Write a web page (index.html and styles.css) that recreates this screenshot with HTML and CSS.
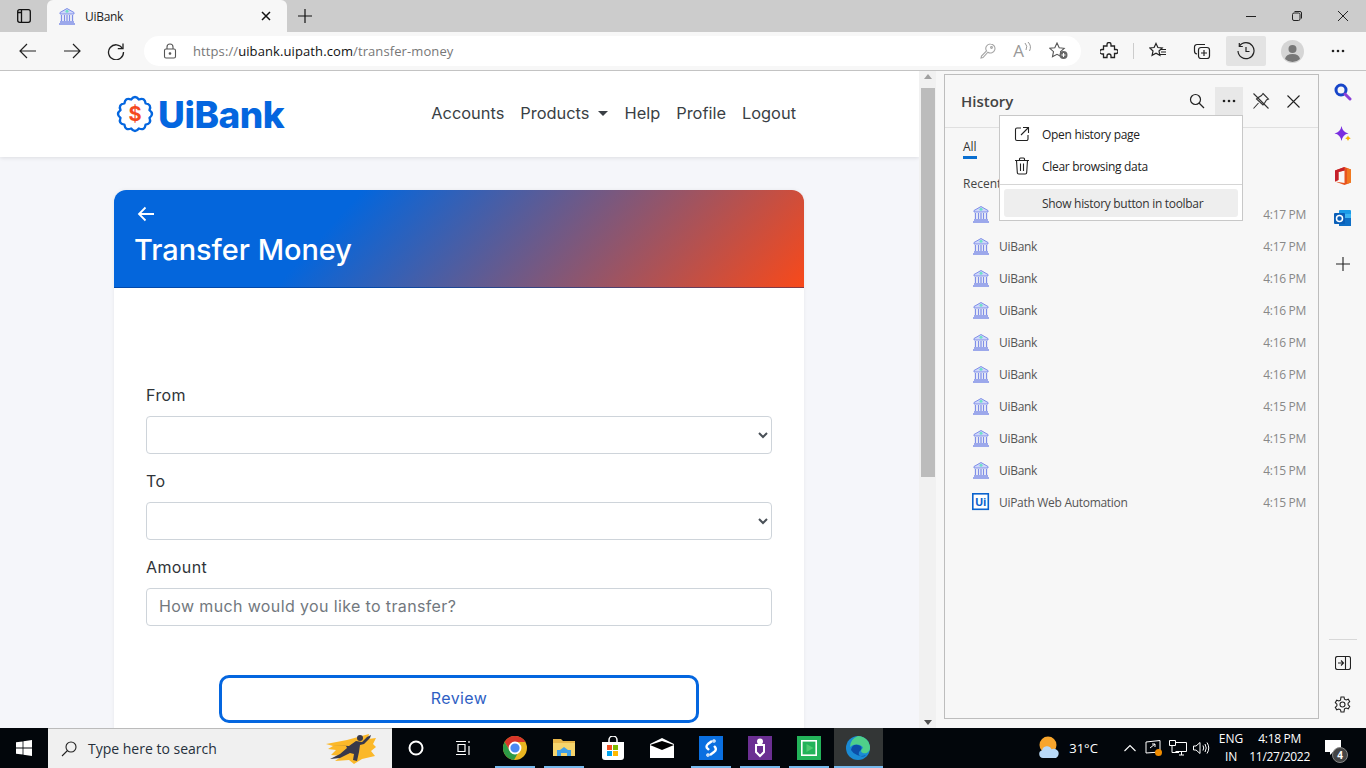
FILE: index.html
```html
<!DOCTYPE html>
<html lang="en">
<head>
<meta charset="utf-8">
<title>UiBank</title>
<link rel="stylesheet" href="styles.css">
</head>
<body>
<svg class="defs" width="0" height="0" aria-hidden="true">
  <symbol id="bank" viewBox="0 0 18 18">
    <path d="M9 1.500 2 5.500v1.500h14V5.500z" fill="#cfd6fb" stroke="#7f8fe8" stroke-width="1"/>
    <circle cx="9" cy="4.300" r="1.500" fill="#6fe0c8"/>
    <path d="M3.500 8v6M6.500 8v6M9 8v6M11.500 8v6M14.500 8v6" stroke="#7f8fe8" stroke-width="1.300"/>
    <path d="M2 15h14M1 17h16" stroke="#7f8fe8" stroke-width="1.300"/>
  </symbol>
</svg>

<header class="titlebar">
  <button class="tb-btn tab-toggle"><svg width="16" height="16" viewBox="0 0 16 16" fill="none" stroke="#111" stroke-width="1.300"><rect x="1.700" y="1.700" width="12.600" height="12.600" rx="2"/><path d="M5.500 2v12M2 4.500h3.500"/></svg></button>
  <div class="tab">
    <svg class="tab-ico" width="18" height="18"><use href="#bank"/></svg>
    <span class="tab-title">UiBank</span>
    <svg class="tab-x" width="10" height="10" viewBox="0 0 10 10" stroke="#111" stroke-width="1.500"><path d="M1 1l8 8M9 1l-8 8"/></svg>
  </div>
  <button class="tb-btn new-tab"><svg width="16" height="16" viewBox="0 0 16 16" stroke="#111" stroke-width="1.200"><path d="M8 1v14M1 8h14"/></svg></button>
  <div class="win-ctrls">
    <svg width="12" height="12" viewBox="0 0 12 12" stroke="#222"><path d="M1 6.500h10"/></svg>
    <svg width="12" height="12" viewBox="0 0 12 12" fill="none" stroke="#222"><rect x="1.500" y="3" width="7.500" height="7.500" rx="1.500"/><path d="M3.500 1.500h5.500a1.500 1.500 0 0 1 1.500 1.500v5.500"/></svg>
    <svg width="12" height="12" viewBox="0 0 12 12" stroke="#222"><path d="M1 1l10 10M11 1 1 11"/></svg>
  </div>
</header>

<nav class="toolbar">
  <button class="ico-btn"><svg width="18" height="18" viewBox="0 0 18 18" fill="none" stroke="#222" stroke-width="1.200"><path d="M17 9H1M8 2 1 9l7 7"/></svg></button>
  <button class="ico-btn"><svg width="18" height="18" viewBox="0 0 18 18" fill="none" stroke="#222" stroke-width="1.200"><path d="M1 9h16M10 2l7 7-7 7"/></svg></button>
  <button class="ico-btn"><svg width="18" height="18" viewBox="0 0 18 18" fill="none" stroke="#222" stroke-width="1.300"><path d="M15.500 6.500A7.500 7.500 0 1 0 16.500 10"/><path d="M16 1.500v5.200h-5.200"/></svg></button>
  <div class="address">
    <svg class="lock" width="14" height="16" viewBox="0 0 14 16" fill="none" stroke="#555" stroke-width="1.100"><rect x="1.500" y="6" width="11" height="9" rx="1.500"/><path d="M4 6V4a3 3 0 0 1 6 0v2"/><circle cx="7" cy="10.500" r=".8" fill="#555"/></svg>
    <span class="url"><span class="url-dim">https://</span>uibank.uipath.com<span class="url-dim">/transfer-money</span></span>
    <div class="addr-icons">
      <svg width="16" height="16" viewBox="0 0 16 16" fill="none" stroke="#a5a5a5" stroke-width="1.100"><path d="M10.500 1a4.500 4.500 0 1 1-2.600 8.200L3 14.500l-2 .5.500-2 5-5.100A4.500 4.500 0 0 1 10.500 1z"/><circle cx="11.500" cy="4.500" r=".9"/></svg>
      <span class="read-aloud">A<svg width="8" height="10" viewBox="0 0 8 10" fill="none" stroke="#999"><path d="M1 1q3 3 1 7M4 0q4 4 1.500 9"/></svg></span>
      <svg width="20" height="18" viewBox="0 0 20 18" fill="none" stroke="#555" stroke-width="1.100"><path d="M8 1l2.200 4.700 5 .6-3.700 3.400 1 5L8 12.300l-4.500 2.400 1-5L.8 6.300l5-.6z"/><circle cx="14.500" cy="13" r="4" fill="#666" stroke="none"/><path d="M14.500 11v4M12.500 13h4" stroke="#fff"/></svg>
    </div>
  </div>
  <div class="tools">
    <button class="tool"><svg width="18" height="18" viewBox="0 0 18 18" fill="none" stroke="#222" stroke-width="1.300"><path d="M7 2.500a2 2 0 0 1 4 0V4h3.500v3.500H16a2 2 0 0 1 0 4h-1.500V15.500H11V14a2 2 0 0 0-4 0v1.500H3.500V12H2a2.200 2.200 0 0 1 0-4.500h1.500V4H7z"/></svg></button>
    <span class="tool-sep"></span>
    <button class="tool"><svg width="18" height="18" viewBox="0 0 18 18" fill="none" stroke="#222" stroke-width="1.200"><path d="M7 1.500l1.900 4 4.300.5-3.200 3 .9 4.300L7 11.200l-3.900 2.100.9-4.300-3.200-3 4.300-.5z"/><path d="M12 7.500h5M12 10h5M11 12.500h6"/></svg></button>
    <button class="tool"><svg width="18" height="18" viewBox="0 0 18 18" fill="none" stroke="#222" stroke-width="1.200"><rect x="5.500" y="5.500" width="11" height="11" rx="2.500"/><path d="M11 8v6M8 11h6M12 2.500H4A2.500 2.500 0 0 0 1.500 5v4A3 3 0 0 0 4 12"/></svg></button>
    <button class="tool tool-on"><svg width="18" height="18" viewBox="0 0 18 18" fill="none" stroke="#222" stroke-width="1.200"><path d="M2.500 4A8 8 0 1 1 1 9"/><path d="M2.300 1v3.500h3.500M9 5v4.500h3.500"/></svg></button>
    <button class="tool avatar-btn"><svg width="23" height="23" viewBox="0 0 23 23"><circle cx="11.500" cy="11.500" r="11.500" fill="#d5d5d5"/><circle cx="11.500" cy="9" r="4" fill="#777"/><path d="M4 19q1-5 7.500-5T19 19a11 11 0 0 1-15 0z" fill="#777"/></svg></button>
    <button class="tool dots-btn"><svg width="14" height="4" viewBox="0 0 14 4" fill="#222"><circle cx="2" cy="2" r="1.300"/><circle cx="7" cy="2" r="1.300"/><circle cx="12" cy="2" r="1.300"/></svg></button>
  </div>
</nav>

<main class="workspace">
  <section class="page">
    <div class="page-scroll">
      <div class="site-nav">
        <div class="brand">
          <svg width="38" height="38" viewBox="0 0 38 38" fill="none"><g transform="translate(19 19)"><path d="M14.490-3.880Q19.500 0 14.490 3.880Q16.890 9.750 10.610 10.610Q9.750 16.890 3.880 14.490Q0 19.500-3.880 14.490Q-9.750 16.890-10.610 10.610Q-16.890 9.750-14.490 3.880Q-19.500 0-14.490-3.880Q-16.890-9.750-10.610-10.610Q-9.750-16.890-3.880-14.490Q0-19.500 3.880-14.490Q9.750-16.890 10.610-10.610Q16.890-9.750 14.490-3.880Z" stroke="#0466df" stroke-width="2.400" stroke-linejoin="round"/></g><text class="brand-dollar" x="19" y="26" text-anchor="middle">$</text></svg>
          <span class="brand-name">UiBank</span>
        </div>
        <ul class="nav-links">
          <li>Accounts</li>
          <li class="caret">Products</li>
          <li>Help</li>
          <li>Profile</li>
          <li>Logout</li>
        </ul>
      </div>
      <div class="card">
        <div class="card-head">
          <svg class="back" width="18" height="16" viewBox="0 0 18 16" fill="none" stroke="#fff" stroke-width="1.800"><path d="M17 8H2M8.500 1.500 2 8l6.500 6.500"/></svg>
          <h1>Transfer Money</h1>
        </div>
        <form class="card-body">
          <label class="lbl" for="from">From</label>
          <select class="ctl" id="from"><option></option></select>
          <label class="lbl" for="to">To</label>
          <select class="ctl" id="to"><option></option></select>
          <label class="lbl" for="amount">Amount</label>
          <input class="ctl" id="amount" placeholder="How much would you like to transfer?">
          <button type="button" class="review">Review</button>
        </form>
      </div>
    </div>
    <div class="scrollbar">
      <span class="arrow-up"></span>
      <span class="thumb"></span>
      <span class="arrow-down"></span>
    </div>
  </section>

  <aside class="history">
    <div class="hist-head">
      <h2>History</h2>
      <div class="hist-actions">
        <button class="hist-btn"><svg width="16" height="16" viewBox="0 0 16 16" fill="none" stroke="#222" stroke-width="1.200"><circle cx="6.500" cy="6.500" r="5"/><path d="M10 10l5 5"/></svg></button>
        <button class="hist-btn hist-on"><svg width="14" height="4" viewBox="0 0 14 4" fill="#222"><circle cx="2" cy="2" r="1.300"/><circle cx="7" cy="2" r="1.300"/><circle cx="12" cy="2" r="1.300"/></svg></button>
        <button class="hist-btn"><svg width="18" height="18" viewBox="0 0 18 18" fill="none" stroke="#333" stroke-width="1.100"><path d="M11 1.500l5.500 5.500-2 1-2.500 4-1 1L4.500 7l1-1 4-2.500zM6.500 11 1.500 16.500M1.500 1.500l15 15"/></svg></button>
        <button class="hist-btn"><svg width="13" height="13" viewBox="0 0 13 13" stroke="#222" stroke-width="1.100"><path d="M.5.500l12 12M12.500.500l-12 12"/></svg></button>
      </div>
    </div>
    <div class="hist-tabs"><span class="hist-tab">All</span></div>
    <div class="hist-recent">Recent</div>
    <ul class="hist-list">
      <li class="hist-row"><svg width="18" height="18"><use href="#bank"/></svg><span class="hist-name"></span><time>4:17 PM</time></li>
      <li class="hist-row"><svg width="18" height="18"><use href="#bank"/></svg><span class="hist-name">UiBank</span><time>4:17 PM</time></li>
      <li class="hist-row"><svg width="18" height="18"><use href="#bank"/></svg><span class="hist-name">UiBank</span><time>4:16 PM</time></li>
      <li class="hist-row"><svg width="18" height="18"><use href="#bank"/></svg><span class="hist-name">UiBank</span><time>4:16 PM</time></li>
      <li class="hist-row"><svg width="18" height="18"><use href="#bank"/></svg><span class="hist-name">UiBank</span><time>4:16 PM</time></li>
      <li class="hist-row"><svg width="18" height="18"><use href="#bank"/></svg><span class="hist-name">UiBank</span><time>4:16 PM</time></li>
      <li class="hist-row"><svg width="18" height="18"><use href="#bank"/></svg><span class="hist-name">UiBank</span><time>4:15 PM</time></li>
      <li class="hist-row"><svg width="18" height="18"><use href="#bank"/></svg><span class="hist-name">UiBank</span><time>4:15 PM</time></li>
      <li class="hist-row"><svg width="18" height="18"><use href="#bank"/></svg><span class="hist-name">UiBank</span><time>4:15 PM</time></li>
      <li class="hist-row"><svg width="18" height="18" viewBox="0 0 18 18"><rect x=".8" y=".8" width="15.500" height="15.500" fill="#fff" stroke="#0b63ce" stroke-width="1.600"/><text class="ui-mark" x="8.500" y="13" text-anchor="middle">Ui</text></svg><span class="hist-name">UiPath Web Automation</span><time>4:15 PM</time></li>
    </ul>
    <div class="menu">
      <div class="menu-item"><svg width="16" height="16" viewBox="0 0 16 16" fill="none" stroke="#222" stroke-width="1.100"><path d="M7 2H3a1.500 1.500 0 0 0-1.500 1.500v9.500A1.500 1.500 0 0 0 3 14.500h9.500A1.500 1.500 0 0 0 14 13V9M9 1.500h5.500V7M14.500 1.500 7 9"/></svg><span>Open history page</span></div>
      <div class="menu-item"><svg width="16" height="18" viewBox="0 0 16 18" fill="none" stroke="#222" stroke-width="1.100"><path d="M1 3.500h14M5.500 3.500V2a1 1 0 0 1 1-1h3a1 1 0 0 1 1 1v1.500M2.500 3.500l.8 12a1.500 1.500 0 0 0 1.500 1.500h6.400a1.500 1.500 0 0 0 1.500-1.500l.8-12M6.500 6.500v7.500M9.500 6.500v7.500"/></svg><span>Clear browsing data</span></div>
      <div class="menu-sep"></div>
      <div class="menu-item menu-on"><span>Show history button in toolbar</span></div>
    </div>
  </aside>

  <aside class="sidebar">
    <div class="side-top">
      <svg width="18" height="18" viewBox="0 0 18 18" fill="none"><circle cx="7" cy="7" r="5" stroke="#1746c9" stroke-width="3"/><path d="M11 11l5 5" stroke="#8b3fd6" stroke-width="3" stroke-linecap="round"/></svg>
      <svg width="18" height="18" viewBox="0 0 18 18"><path d="M7.500 1q1 6 7 7.500-6 1-7 7.500-1-6.500-7-7.500 6-1.500 7-7.500z" fill="#7a2fe0"/><path d="M14 10.500q.4 2.200 2.800 2.800-2.400.6-2.800 2.800-.4-2.200-2.800-2.800 2.400-.6 2.800-2.800z" fill="#f6b400"/></svg>
      <svg class="side-tall" width="18" height="20" viewBox="0 0 18 20"><path d="M10.500 1 17 3.500v13L10.500 19 1 15.500l9.500 1.500V4.500L4.500 6v8L1 15.500v-11z" fill="#e8541e"/><path d="M1 4.500 10.500 1v3.500L4.500 6v8L1 15.500z" fill="#c4202c"/><path d="M13 2.200 17 3.500v13l-4 1.500z" fill="#f0791f"/></svg>
      <svg width="18" height="18" viewBox="0 0 18 18"><rect x="5" y="1" width="12" height="16" rx="1" fill="#1a9be8"/><path d="M5 9h12v8H5z" fill="#0f6fc6"/><path d="M11 5h6v4h-6z" fill="#3ab4f2"/><rect x="0" y="4" width="11" height="11" rx="1" fill="#0a5fb8"/><circle cx="5.500" cy="9.500" r="3" fill="none" stroke="#fff" stroke-width="1.500"/></svg>
      <svg class="side-plus" width="14" height="14" viewBox="0 0 14 14" stroke="#222" stroke-width="1.100"><path d="M7 0v14M0 7h14"/></svg>
    </div>
    <div class="side-bottom">
      <svg width="16" height="14" viewBox="0 0 16 14" fill="none" stroke="#222" stroke-width="1.100"><rect x=".5" y=".5" width="15" height="13" rx="2"/><path d="M10.500 1v12M3 7h5M6 4.500 8.500 7 6 9.500"/></svg>
      <svg width="17" height="17" viewBox="0 0 17 17" fill="none" stroke="#222" stroke-width="1.100"><circle cx="8.500" cy="8.500" r="2.500"/><path d="M7 1h3l.5 2.200 1.600.8 2.200-.8 1.400 2.500-1.600 1.500v1.600l1.600 1.500-1.400 2.500-2.200-.8-1.600.8L10 16H7l-.5-2.200-1.600-.8-2.200.8L1.300 11.300 2.900 9.800V8.200L1.300 6.700 2.700 4.200l2.200.8L6.500 4.200z"/></svg>
    </div>
  </aside>
</main>

<footer class="taskbar">
  <button class="start"><svg width="16" height="16" viewBox="0 0 16 16" fill="#fff"><path d="M0 2.300 6.600 1.400v6.200H0zM7.400 1.300 16 0v7.600H7.400zM0 8.400h6.600v6.200L0 13.700zM7.400 8.400H16V16l-8.600-1.300z"/></svg></button>
  <div class="search">
    <svg width="16" height="16" viewBox="0 0 16 16" fill="none" stroke="#222" stroke-width="1.100"><circle cx="10" cy="6" r="5"/><path d="M6.500 9.500 1 15"/></svg>
    <span class="search-text">Type here to search</span>
    <svg class="search-art" width="54" height="34" viewBox="0 0 54 34"><path d="M3 12 24 8l22-6-1 5 8-1-3 6 3 3-5 4 4 5-13 3-8 5-5-4-14 1 7-5-11-1 5-5-8-1 5-3z" fill="#fbb829"/><circle cx="37" cy="6" r="3" fill="#38384a"/><path d="M9 13l17 1 7-5 6 1 5-5 4-2-1 3-6 6-4 1-1 7-2 9-4-1 1-6-4-1-10 5-10 1 10-5 7-6-1-2z" fill="#38384a"/></svg>
  </div>
  <button class="task cortana"><svg width="16" height="16" viewBox="0 0 16 16" fill="none" stroke="#fff" stroke-width="2"><circle cx="8" cy="8" r="6.500"/></svg></button>
  <button class="task taskview"><svg width="16" height="16" viewBox="0 0 16 16" fill="none" stroke="#fff" stroke-width="1.200"><path d="M1 1.500h10M3 4.500h7v7H3zM1 14.500h10M14 1v2M14 6v9"/></svg></button>
  <button class="task open"><svg width="24" height="24" viewBox="0 0 24 24"><circle cx="12" cy="12" r="12" fill="#e9b520"/><path d="M12 6h10.400A12 12 0 0 0 1.600 6L7 15z" fill="#d8352a"/><path d="M1.600 6A12 12 0 0 0 11 24l5-9-9 0z" fill="#2d9a46"/><circle cx="12" cy="12" r="5.500" fill="#4a89f2" stroke="#fff" stroke-width="1.800"/></svg></button>
  <button class="task open"><svg width="22" height="20" viewBox="0 0 22 20"><path d="M0 1h8l2 2h12v15H0z" fill="#e8b64a"/><path d="M0 5h22v13H0z" fill="#f6d46c"/><path d="M4 18v-6h3l4-3 4 3h3v6h-4v-3H8v3z" fill="#3f9fe8"/></svg></button>
  <button class="task"><svg width="24" height="24" viewBox="0 0 24 24"><path d="M1 6h22v15a3 3 0 0 1-3 3H4a3 3 0 0 1-3-3z" fill="#fff"/><path d="M8 6V4a4 4 0 0 1 8 0v2" fill="none" stroke="#fff" stroke-width="1.500"/><path d="M6 9h5v5H6z" fill="#f25022"/><path d="M12 9h5v5h-5z" fill="#7fba00"/><path d="M6 15h5v5H6z" fill="#00a4ef"/><path d="M12 15h5v5h-5z" fill="#ffb900"/></svg></button>
  <button class="task"><svg width="24" height="20" viewBox="0 0 24 20"><path d="M0 6 12 0l12 6v14H0z" fill="#fff"/><path d="M0 7 12 3l12 4-12 5z" fill="#000"/></svg></button>
  <button class="task open"><span class="tile tile-blue"><svg width="14" height="20" viewBox="0 0 14 20" fill="none" stroke="#fff" stroke-width="2.400"><path d="M8 3 4 6q-3 3 0 5l1 1"/><path d="M6 17l4-3q3-2 1-5l-1-1"/><circle cx="10" cy="3" r=".6"/><circle cx="4" cy="17" r=".6"/></svg></span></button>
  <button class="task open"><span class="tile tile-purple"><svg width="14" height="20" viewBox="0 0 14 20" fill="none" stroke="#fff" stroke-width="2"><circle cx="7" cy="3.500" r="2" fill="#fff"/><path d="M3 7h8v7l-4 4-4-4z"/></svg></span></button>
  <button class="task open"><span class="tile tile-green"><svg width="16" height="16" viewBox="0 0 16 16"><rect x=".8" y=".8" width="14.400" height="14.400" fill="none" stroke="#fff" stroke-width="1.600"/><path d="M5.500 4l7 4-7 4z" fill="#4ecb71"/></svg></span></button>
  <button class="task open active"><svg width="24" height="24" viewBox="0 0 24 24"><circle cx="12" cy="12" r="12" fill="#1a8ad4"/><path d="M12 0a12 12 0 0 1 12 12c0 4-4 6-7 5-3-1-2-4 0-5-1-4-9-5-13-1A12 12 0 0 1 12 0z" fill="#4fd08a"/><path d="M5 14q1-6 7-5 5 1 3 5-3 2-2 5 4 3 7 0a12 12 0 0 1-15-5z" fill="#0c4ea8"/></svg></button>
  <div class="tray">
    <svg class="weather" width="24" height="24" viewBox="0 0 24 24"><circle cx="11" cy="9" r="8.500" fill="#f8a52c"/><path d="M6 22a4 4 0 0 1-1-7.800 5 5 0 0 1 9.500-1A4.500 4.500 0 0 1 19 22z" fill="#b9d9f7"/></svg>
    <span class="temp">31°C</span>
    <svg class="chev" width="12" height="8" viewBox="0 0 12 8" fill="none" stroke="#fff" stroke-width="1.100"><path d="M.5 7 6 1.500 11.500 7"/></svg>
    <svg class="tray-ico" width="18" height="18" viewBox="0 0 18 18" fill="none" stroke="#fff"><path d="M1 3l14-1.500V13L1 14z"/><path d="M5 9l5-4M7 5h3v3"/><circle cx="13.500" cy="13.500" r="3.500" fill="#f08c00" stroke="none"/></svg>
    <svg class="tray-ico" width="18" height="18" viewBox="0 0 18 18" fill="none" stroke="#fff"><path d="M.5 1.500h6v5h-6zM3 6.500v7M6.500 3.500h11v9h-11M10 16h5M12.500 12.500V16M3 13.500h7"/></svg>
    <svg class="tray-ico" width="17" height="14" viewBox="0 0 17 14" fill="none" stroke="#fff"><path d="M.5 5v4h2.500l4 3.500v-11l-4 3.500z"/><path d="M10 4.500q1.500 2.500 0 5M12 3q2.500 4 0 8M14 1.500q3.500 5.500 0 11"/></svg>
    <div class="lang"><span>ENG</span><span>IN</span></div>
    <div class="clock"><span>4:18 PM</span><span>11/27/2022</span></div>
    <div class="notif">
      <svg width="17" height="16" viewBox="0 0 17 16" fill="#fff"><path d="M0 0h16v12H8l-3 3v-3H0z"/></svg>
      <span class="badge">4</span>
    </div>
  </div>
</footer>
</body>
</html>
```

FILE: styles.css
```css
* { box-sizing: border-box; }
html, body { margin: 0; height: 100%; }
body {
  width: 1366px;
  height: 768px;
  overflow: hidden;
  display: flex;
  flex-direction: column;
  font-family: "Open Sans", "Noto Sans", sans-serif;
  background: #f7f7f7;
  color: #222;
}
button { border: 0; background: none; padding: 0; margin: 0; font: inherit; display: flex; align-items: center; justify-content: center; }
ul { list-style: none; margin: 0; padding: 0; }
h1, h2 { margin: 0; }
.defs { display: block; height: 0; }

/* title bar */
.titlebar { height: 32px; flex: none; background: #cccccc; display: flex; align-items: center; }
.tb-btn { height: 32px; }
.tab-toggle { width: 47px; }
.new-tab { width: 36px; }
.tab {
  width: 240px; height: 32px; background: #f7f7f7; border-radius: 6px 6px 0 0;
  display: flex; align-items: center; padding: 0 16px 0 11px;
}
.tab-title { font-size: 12px; margin-left: 9px; flex: 1; letter-spacing: -.3px; }
.win-ctrls { margin-left: auto; width: 138px; padding: 0 17px 0 17px; display: flex; justify-content: space-between; align-items: center; }

/* toolbar */
.toolbar { height: 39px; flex: none; background: #f7f7f7; border-bottom: 1px solid #c3c3c3; display: flex; align-items: center; padding: 0 6px; }
.ico-btn { width: 44px; height: 30px; }
.address {
  width: 937px; height: 30px; margin-left: 6px; background: #fff; border-radius: 15px;
  display: flex; align-items: center; padding: 0 12px 0 19px;
}
.url { font-size: 13px; color: #111; margin-left: 16px; letter-spacing: .1px; }
.url-dim { color: #777; }
.addr-icons { margin-left: auto; display: flex; align-items: center; gap: 17px; }
.read-aloud { color: #999; font-size: 17px; display: flex; align-items: flex-start; line-height: 18px; }
.tools { display: flex; align-items: center; margin-left: 6px; }
.tool { width: 44px; height: 30px; }
.tool-sep { width: 1px; height: 16px; background: #ccc; margin: 0 2px; }
.tool-on { width: 40px; background: #e3e3e3; margin: 0 2px; border-radius: 2px; }
.avatar-btn { width: 48px; }
.dots-btn { width: 44px; }

/* workspace */
.workspace { flex: 1; min-height: 0; display: flex; background: #f7f7f7; }
.page { width: 936px; flex: none; display: flex; background: #f5f6fa; }
.page-scroll { width: 919px; overflow: hidden; font-family: "Inter", sans-serif; }
.site-nav {
  height: 86px; background: #fff; box-shadow: 0 1px 4px rgba(0,0,0,.1);
  display: flex; align-items: center; padding: 0 123px 0 116px; justify-content: space-between;
}
.brand { display: flex; align-items: center; gap: 4px; }
.brand-dollar { font: 700 20px "Inter", sans-serif; fill: #f4491f; }
.brand-name { font: 800 37px/1 "Inter", sans-serif; color: #0466df; letter-spacing: -.5px; }
.nav-links { display: flex; gap: 16px; font-size: 16.400px; color: #3a3f45; margin-bottom: 2px; }
.caret { display: flex; align-items: center; gap: 9px; }
.caret::after { content: ""; border: 5px solid transparent; border-top-color: #3a3f45; border-bottom: 0; }

.card { width: 690px; margin: 33px 0 0 114px; background: #fff; border-radius: 12px 12px 0 0; box-shadow: 0 0 4px rgba(0,0,0,.06); height: 600px; overflow: hidden; }
.card-head { height: 98px; padding: 16px 20px 0; border-bottom: 1px solid rgba(0,20,80,.35); background: linear-gradient(132deg, #0466dc 32%, #f8491a 100%); color: #fff; }
.back { display: block; margin-left: 3px; }
.card-head h1 { font-size: 28.900px; font-weight: 500; line-height: 40px; margin-top: 8px; }
.card-body { padding: 96px 32px 0; display: flex; flex-direction: column; }
.lbl { font-size: 16px; line-height: 22px; margin-bottom: 10px; color: #2f3439; letter-spacing: .4px; }
.ctl {
  height: 38px; margin-bottom: 16px; border: 1px solid #ced4da; border-radius: 4px; background: #fff;
  font: 16px "Inter", sans-serif; padding: 0 12px 2px; color: #495057; width: 100%; letter-spacing: .37px;
}
.ctl::placeholder { color: #72787e; opacity: 1; }
.review {
  width: 480px; height: 48px; margin: 33px 0 0 73px; border: 3px solid #0466df; border-radius: 10px;
  background: #fff; color: #2f5fc4; font-size: 16px; letter-spacing: .4px; padding-bottom: 2px;
}

/* scrollbar */
.scrollbar { width: 17px; background: #f1f1f1; display: flex; flex-direction: column; align-items: center; padding: 3px 0; }
.thumb { width: 14px; height: 389px; background: #bcbcbc; margin-top: 9px; }
.arrow-up { border: 4px solid transparent; border-bottom: 5px solid #a0a0a0; border-top: 0; }
.arrow-down { border: 4px solid transparent; border-top: 5px solid #505050; border-bottom: 0; margin-top: auto; }

/* history */
.history {
  position: relative; width: 375px; margin: 3px 0 9px 8px; flex: none;
  border: 1px solid #bdbdbd; background: #f7f7f7; font-size: 12px; letter-spacing: -.3px;
}
.hist-head { height: 53px; border-bottom: 1px solid #e0e0e0; display: flex; align-items: center; padding: 0 11px 0 16px; }
.hist-head h2 { font-size: 15px; font-weight: 600; color: #444; letter-spacing: 0; }
.hist-actions { margin-left: auto; display: flex; align-items: center; gap: 4px; }
.hist-btn { width: 28px; height: 28px; }
.hist-on { background: #e8e8e8; }
.hist-tabs { height: 30px; padding: 10px 0 0 18px; }
.hist-tab { display: inline-block; height: 20px; border-bottom: 3px solid #0a6fd0; font-size: 12px; line-height: 15px; color: #333; letter-spacing: 0; }
.hist-recent { padding: 18px 0 0 18px; line-height: 16px; color: #444; height: 40px; letter-spacing: 0; }
.hist-row { height: 32px; display: flex; align-items: center; padding: 0 12px 0 27px; }
.hist-name { margin-left: 9px; color: #555; flex: 1; }
.hist-row time { color: #888; }
.ui-mark { font: 700 11px "Open Sans", sans-serif; fill: #0b63ce; }
.menu {
  position: absolute; top: 40px; left: 54px; width: 244px; height: 106px; background: #fff;
  border: 1px solid #c8c8c8; padding: 2px 4px 0;
}
.menu-item { height: 32px; display: flex; align-items: center; gap: 12px; padding-left: 10px; color: #222; }
.menu-sep { height: 1px; background: #d5d5d5; margin: 2px -4px 4px; }
.menu-on { height: 28px; background: #eeeeee; border-radius: 3px; padding-left: 38px; color: #333; }

/* sidebar */
.sidebar { flex: 1; display: flex; flex-direction: column; align-items: center; padding: 12px 0 15px; }
.side-top { display: flex; flex-direction: column; align-items: center; gap: 24px; }
.side-tall { margin: -1px 0; }
.side-plus { margin-top: 6px; }
.side-bottom { margin-top: auto; display: flex; flex-direction: column; align-items: center; gap: 26px; border-top: 1px solid #d8d8d8; width: 28px; padding-top: 16px; }

/* taskbar */
.taskbar { height: 40px; flex: none; background: #02060b; display: flex; align-items: stretch; color: #fff; }
.start { width: 48px; }
.search { width: 344px; background: #f0f0f0; border-top: 1px solid #bbb; display: flex; align-items: center; padding: 0 15px 0 13px; color: #222; }
.search-text { font-size: 14px; margin-left: 11px; color: #26303c; }
.search-art { margin-left: auto; }
.task { width: 49px; position: relative; }
.cortana { width: 48px; }
.taskview { width: 50.500px; padding-right: 4px; }
.task.open::after { content: ""; position: absolute; left: 4.500px; right: 4.500px; bottom: 0; height: 2px; background: #76b9ed; }
.task.active { background: #333636; }
.task.active::after { left: 0; right: 0; }
.tile { width: 24px; height: 24px; display: flex; align-items: center; justify-content: center; }
.tile-blue { background: #0a6fe0; }
.tile-purple { background: #6b2f92; }
.tile-green { background: #23b35a; }
.tray { margin-left: auto; display: flex; align-items: center; font-size: 12px; }
.weather { margin-right: 8px; }
.temp { font-size: 13px; margin-right: 26px; }
.chev { margin-right: 9px; }
.tray-ico { margin-right: 6px; }
.lang, .clock { display: flex; flex-direction: column; align-items: center; line-height: 18px; }
.lang { margin: 0 6px 0 3px; }
.clock { letter-spacing: -.3px; }
.notif { align-self: stretch; width: 56px; padding-right: 10px; position: relative; display: flex; align-items: center; justify-content: center; }
.badge { position: absolute; top: 19px; left: 22px; width: 16px; height: 16px; border-radius: 50%; background: #444; border: 1px solid #888; font-size: 10px; font-weight: 700; line-height: 1; display: flex; align-items: center; justify-content: center; }
```
